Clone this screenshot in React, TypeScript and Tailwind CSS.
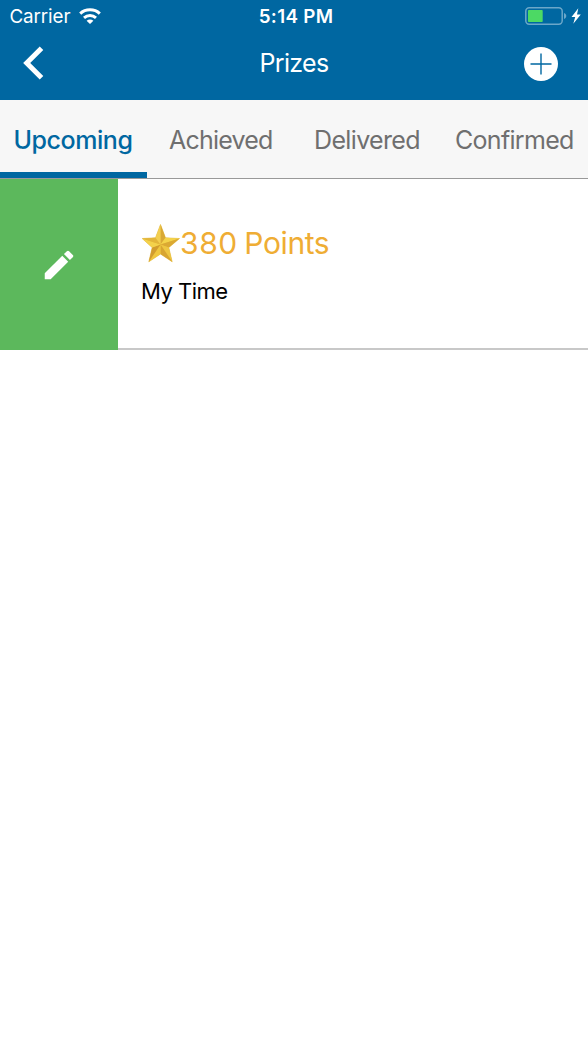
import React from "react";

const tabs = [
  { label: "Upcoming", cls: "w-[147px] pl-[13.5px] text-[#0067a1] font-medium tracking-[-0.45px] border-[#0067a1]" },
  { label: "Achieved", cls: "w-[147px] pl-[22px] text-[#6f6f6f] tracking-[-0.8px] border-transparent" },
  { label: "Delivered", cls: "w-[147px] pl-[20px] text-[#6f6f6f] tracking-[-0.65px] border-transparent" },
  { label: "Confirmed", cls: "w-[147px] pl-[14px] text-[#6f6f6f] tracking-[-0.7px] border-transparent" },
];

function StatusBar() {
  return (
    <div className="grid h-8 grid-cols-3 items-center text-[18.8px] leading-8">
      <div className="flex items-center pl-[9.5px]">
        <span className="w-[69.5px] pt-px leading-[31px] tracking-[-0.1px]">Carrier</span>
        <svg width="22" height="16" viewBox="0 0 22 16" fill="none" stroke="white" strokeWidth="3">
          <path d="M1.2 5.6C6.5.6 15.5.6 20.8 5.6" />
          <path d="M5 9.9c3.5-3.1 8.5-3.1 12 0" />
          <path d="M7.6 12.8c2-1.8 4.8-1.8 6.8 0L11 16z" fill="white" stroke="none" />
        </svg>
      </div>
      <div className="pt-px pl-[4px] text-center leading-[31px] font-semibold tracking-[0.3px]">5:14 PM</div>
      <div className="flex items-center justify-end gap-[4px] pr-[7px]">
        <svg width="42" height="18" viewBox="0 0 42 18">
          <rect x="0.8" y="0.8" width="36.4" height="16.4" rx="3.4" fill="none" stroke="#6ba7c9" strokeWidth="1.5" />
          <rect x="3" y="3" width="14.7" height="12" rx="0.8" fill="#4cd964" />
          <path d="M39 6c3 1 3 5 0 6z" fill="#6ba7c9" />
        </svg>
        <svg width="10" height="16" viewBox="0 0 10 16" fill="white">
          <path d="M7.3.3.5 9h3.7L2.3 15.7 9.8 6.6H6z" />
        </svg>
      </div>
    </div>
  );
}

function Star() {
  const points = [
    [18.5, 0.5], [23.5, 13.8], [37.5, 14.5], [26.8, 23.6], [30.2, 37.8],
    [18.5, 30], [6.8, 37.8], [10.2, 23.6], [0.2, 14.5], [13.5, 13.8],
  ];
  const fills = ["#d9a935", "#f4d34a", "#dba933", "#eec641", "#d8a531", "#f0c73e", "#d29d2e", "#f4d24b", "#e3b63a", "#f3cf50"];
  return (
    <svg width="38" height="39" viewBox="0 0 38 39" className="shrink-0">
      <polygon points={points.map((p) => p.join(",")).join(" ")} fill="#e6bc3e" stroke="#e3b844" strokeWidth="0.6" />
      {points.map((p, i) => {
        const next = points[(i + 1) % 10];
        return <polygon key={i} points={`18.5,20.5 ${p.join(",")} ${next.join(",")}`} fill={fills[i]} />;
      })}
    </svg>
  );
}

export default function App() {
  return (
    <main className="h-[1047px] w-[588px] overflow-hidden bg-white font-['Inter',sans-serif]">
      <header className="h-[100px] bg-[#0067a1] text-white">
        <StatusBar />
        <div className="grid h-[62px] grid-cols-3 items-center">
          <button className="pl-[23px]" aria-label="Back">
            <svg width="22" height="34" viewBox="0 0 22 34" fill="none" stroke="white" strokeWidth="5">
              <path d="M18.5 2.2 3.7 17l14.8 14.8" />
            </svg>
          </button>
          <h1 className="pb-px text-center text-[25px] leading-8 tracking-[-0.65px]">Prizes</h1>
          <button className="flex justify-end pr-[30px]" aria-label="Add">
            <svg width="34" height="36" viewBox="0 0 34 36">
              <circle cx="17" cy="19" r="17" fill="white" />
              <path d="M17 8.5v21M6.5 19h21" stroke="#0067a1" strokeWidth="1.4" />
            </svg>
          </button>
        </div>
      </header>
      <nav className="flex h-[79px] border-b border-[#999] bg-[#f7f7f7] text-[25px]">
        {tabs.map((t) => (
          <button key={t.label} className={`h-[78px] border-b-6 pt-[9px] text-left whitespace-nowrap ${t.cls}`}>
            {t.label}
          </button>
        ))}
      </nav>
      <section className="flex h-[171px]">
        <button className="flex w-[118px] items-center justify-center bg-[#5cb85c]" aria-label="Edit">
          <svg width="38" height="38" viewBox="0 0 24 24" fill="white">
            <path d="M3 17.25V21h3.75L17.81 9.94l-3.75-3.75L3 17.25zM20.71 7.04a1 1 0 0 0 0-1.41l-2.34-2.34a1 1 0 0 0-1.41 0l-1.83 1.83 3.75 3.75 1.83-1.83z" />
          </svg>
        </button>
        <div className="flex-1 border-b-2 border-[#c8c8c8] pt-[44px] pl-[24px]">
          <div className="flex h-[40px] items-center text-[#efad34]">
            <Star />
            <span className="pb-px text-[30px] leading-10 tracking-[-0.4px]">
              <span className="tracking-[0.6px]">380</span>
              <span className="-ml-[1.5px]"> Points</span>
            </span>
          </div>
          <p className="-ml-px mt-[12px] text-[22px] leading-8 tracking-[-0.5px] text-black">My Time</p>
        </div>
      </section>
    </main>
  );
}
